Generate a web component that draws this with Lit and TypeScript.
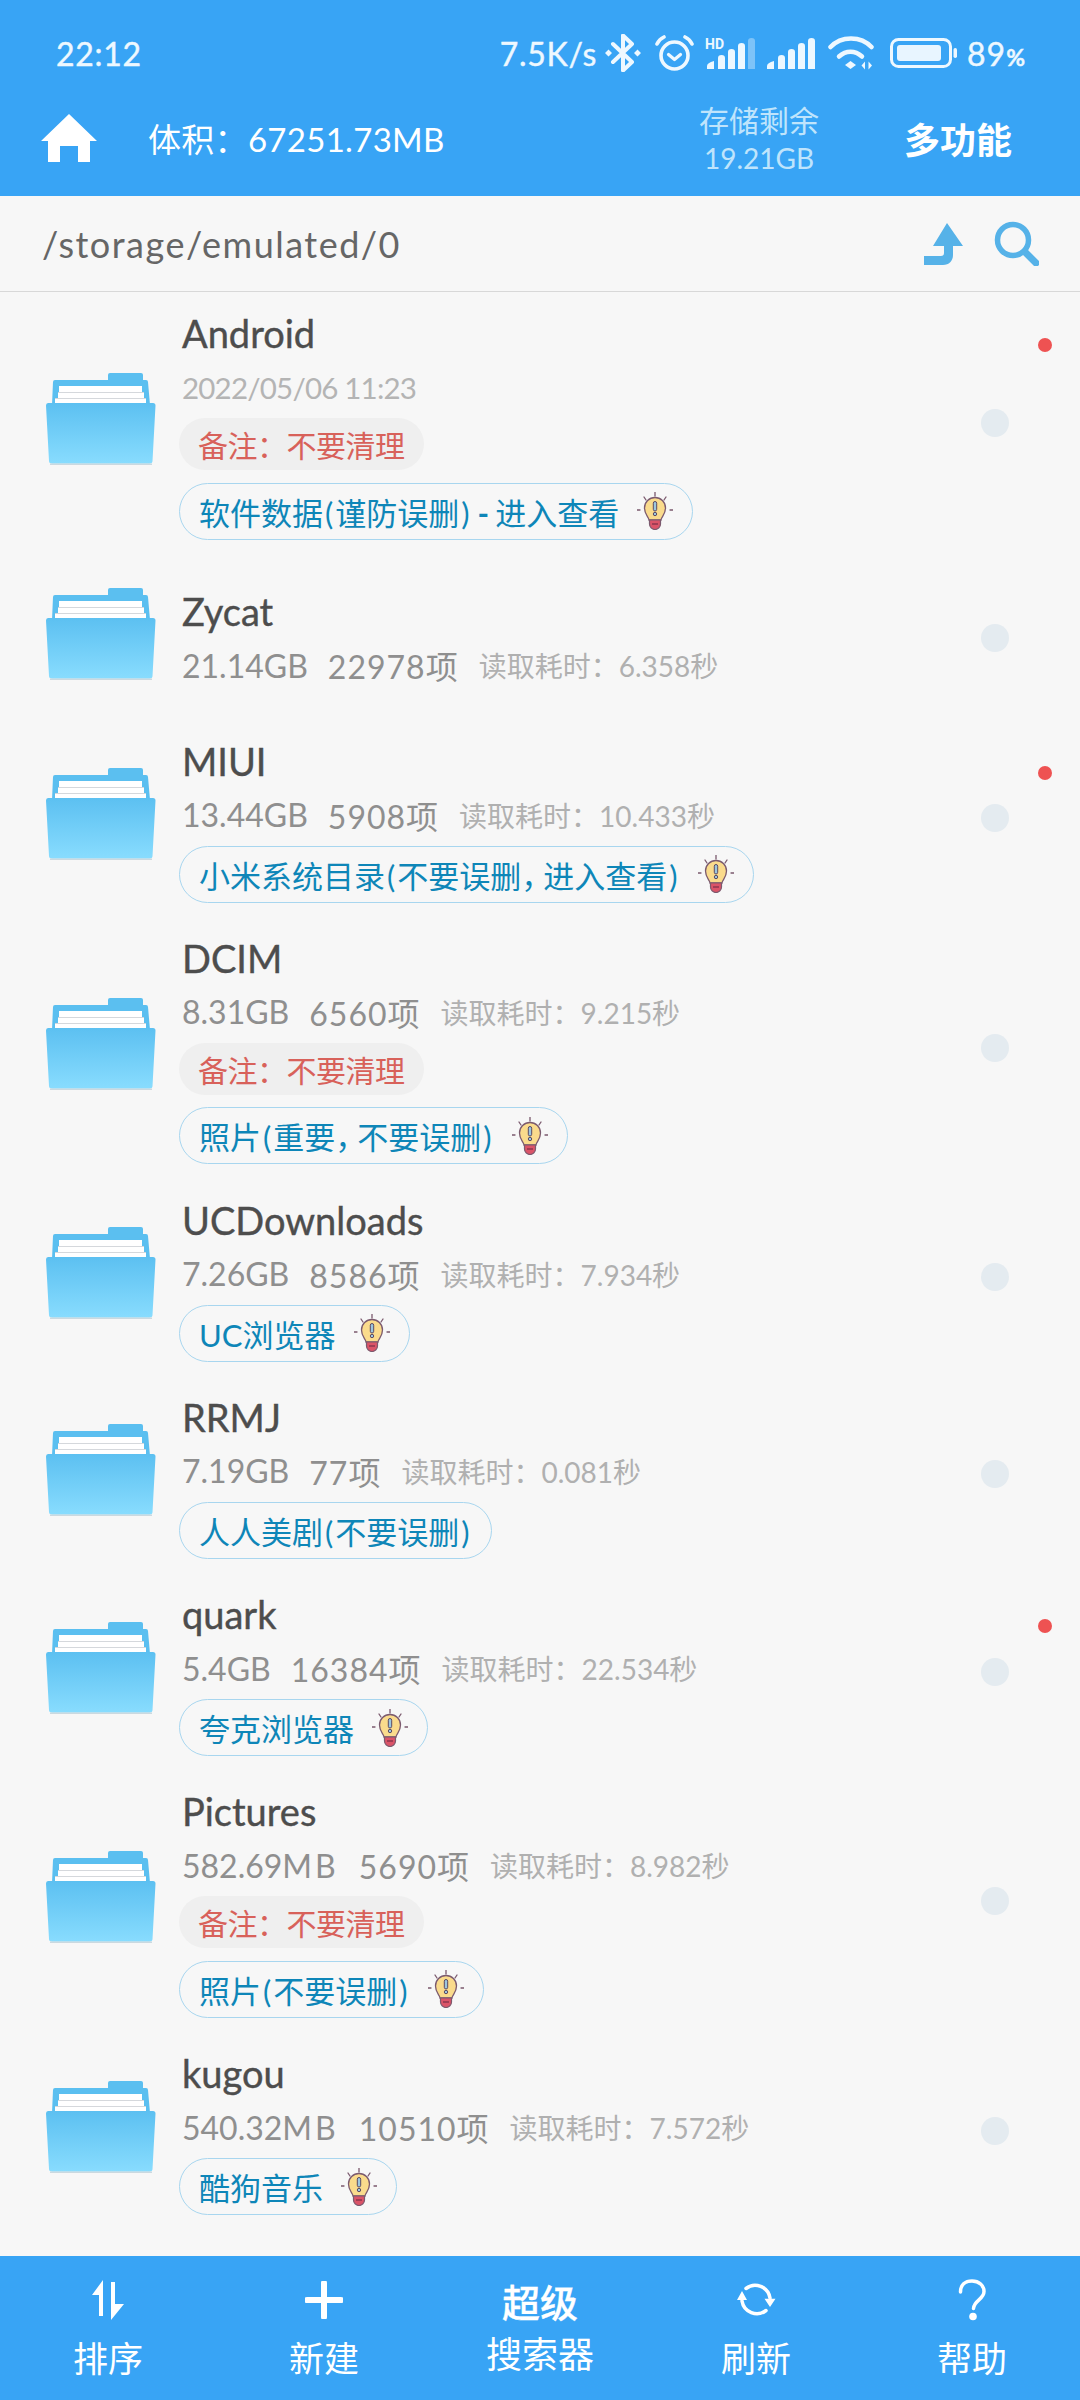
import { LitElement, html, css, svg, nothing } from "lit";
import { customElement } from "lit/decorators.js";

interface Row {
  name: string;
  date?: string;
  size?: string;
  count?: string;
  time?: string;
  note?: boolean;
  tip?: string;
  bulb?: boolean;
  red?: boolean;
  extra?: number;
}

const ROWS: Row[] = [
  { name: "Android", date: "2022/05/06 11:23", note: true, tip: "软件数据(谨防误删)-进入查看", bulb: true, red: true, extra: 16.5 },
  { name: "Zycat", size: "21.14GB", count: "22978项", time: "读取耗时：6.358秒", extra: 13.5 },
  { name: "MIUI", size: "13.44GB", count: "5908项", time: "读取耗时：10.433秒", tip: "小米系统目录(不要误删，进入查看)", bulb: true, red: true },
  { name: "DCIM", size: "8.31GB", count: "6560项", time: "读取耗时：9.215秒", note: true, tip: "照片(重要，不要误删)", bulb: true },
  { name: "UCDownloads", size: "7.26GB", count: "8586项", time: "读取耗时：7.934秒", tip: "UC浏览器", bulb: true },
  { name: "RRMJ", size: "7.19GB", count: "77项", time: "读取耗时：0.081秒", tip: "人人美剧(不要误删)" },
  { name: "quark", size: "5.4GB", count: "16384项", time: "读取耗时：22.534秒", tip: "夸克浏览器", bulb: true, red: true },
  { name: "Pictures", size: "582.69MB", count: "5690项", time: "读取耗时：8.982秒", note: true, tip: "照片(不要误删)", bulb: true },
  { name: "kugou", size: "540.32MB", count: "10510项", time: "读取耗时：7.572秒", tip: "酷狗音乐", bulb: true },
];

const folder = html`<svg class="folder" viewBox="0 0 110 92">
  <defs>
    <linearGradient id="fg" x1="0" y1="0" x2="0" y2="1">
      <stop offset="0" stop-color="#5CC0F1" />
      <stop offset="1" stop-color="#88DCFE" />
    </linearGradient>
  </defs>
  <path d="M62 7V2q0-2 2-2h31q2 0 2 2v5z" fill="#5BBFF0" />
  <path d="M9 7h91q2 0 2 2l2 23H6L7 9q0-2 2-2z" fill="#5BBFF0" />
  <rect x="13" y="13" width="83" height="6" fill="#fff" />
  <rect x="12" y="19" width="86" height="1.5" fill="#d5d8dc" />
  <rect x="12" y="20" width="86" height="5" fill="#fff" />
  <rect x="9" y="25" width="91" height="1.5" fill="#d5d8dc" />
  <rect x="9" y="26" width="91" height="5" fill="#fff" />
  <path d="M2 30h105q2.500 0 2.500 2.500L106.500 88q0 2.500-3 2.500H6q-3 0-3-2.500L0 32.500Q0 30 2 30z" fill="url(#fg)" />
  <rect x="4" y="90.500" width="102" height="1.500" fill="#b8ccd6" opacity=".7" />
</svg>`;

const bulb = html`<svg class="bulb" viewBox="0 0 36 38">
  <g stroke="#7b5a6e" stroke-width="1.300" stroke-linecap="round" fill="none">
    <path d="M18 0v4M7 5l2 3M29 5l-2 3M0 18h3M33 18h3" />
  </g>
  <path d="M12 28c0-3-4.500-5-4.500-12a10.500 10.500 0 0 1 21 0c0 7-4.500 9-4.500 12z" fill="#FADB8C" stroke="#7b5a6e" stroke-width="1.300" />
  <path d="M12.500 28h11v4a5.500 5.500 0 0 1-11 0z" fill="#DB5468" stroke="#7b5a6e" stroke-width="1.200" />
  <path d="M15 32h6" stroke="#7b3048" stroke-width="1.200" />
  <rect x="16.300" y="9.500" width="3.400" height="9.500" rx="1.700" fill="#9CC7DF" stroke="#5c4a62" stroke-width="1" />
  <circle cx="18" cy="22" r="1.700" fill="#9CC7DF" stroke="#5c4a62" stroke-width="1" />
</svg>`;

const ICON = "#eef8ff";
const bar = (x: number, top: number, fill: string) =>
  svg`<path d="M${x} 31v-${31 - top - 3}q0-3 3.500-3t3.500 3v${31 - top - 3}z" fill="${fill}" />`;
const bars = (x0: number, last: string) => svg`
  <path d="M${x0} 31v-3q0-3 7-5v8z" fill="${ICON}" />
  ${bar(x0 + 11, 17, ICON)}
  ${bar(x0 + 21, 11, ICON)}
  ${bar(x0 + 31, 5, ICON)}
  ${bar(x0 + 41, 0, last)}
`;

@customElement("app-root")
export class AppRoot extends LitElement {
  static styles = css`
    :host {
      display: flex;
      flex-direction: column;
      width: 1080px;
      height: 2400px;
      overflow: hidden;
      background: #f7f7f7;
      font-family: Lato, "Noto Sans CJK SC", sans-serif;
    }
    .head {
      background: #38a4f5;
      color: #fff;
      height: 196px;
      flex: none;
      display: flex;
      flex-direction: column;
    }
    .status {
      height: 106px;
      flex: none;
      display: flex;
      align-items: center;
      padding: 0 55px 0 56px;
      font-size: 32px;
      color: #eef8ff;
      letter-spacing: 0.7px;
      -webkit-text-stroke: 0.4px #eef8ff;
    }
    .status .time { flex: 1; }
    .status svg { display: block; flex: none; }
    .speed { margin-right: 8px; }
    .bt { width: 36px; height: 38px; margin-right: 14px; }
    .alarm { width: 39px; height: 36px; margin-right: 11px; }
    .sig-hd { width: 50px; height: 35px; margin: -4px 12px 0 0; }
    .sig { width: 48px; height: 31px; margin-right: 13px; }
    .wifi { width: 46px; height: 36px; margin-right: 16px; }
    .batt { width: 67px; height: 30px; margin-right: 10px; }
    .pct { font-size: 32px; letter-spacing: 1px; }
    .pct small { font-size: 23px; font-weight: 700; letter-spacing: 0; }
    .tool {
      flex: 1;
      min-height: 0;
      display: flex;
      align-items: center;
      padding: 0 68px 24px 41px;
      margin-top: -2px;
    }
    .home { width: 56px; height: 48px; margin-right: 51px; display: block; flex: none; }
    .vol { font-size: 33px; flex: 1; letter-spacing: 0.3px; }
    .free {
      font-size: 30px;
      line-height: 38px;
      text-align: center;
      color: #bfe4fc;
      margin: 2px 85px 0 0;
    }
    .free div:last-child { font-size: 28px; }
    .more { font-size: 36px; font-weight: 700; }
    .path {
      height: 96px;
      flex: none;
      box-sizing: border-box;
      border-bottom: 1.5px solid #d8d8d8;
      display: flex;
      align-items: center;
      padding: 0 41px 0 42px;
      color: #666;
      font-size: 36px;
      background: #f7f7f7;
    }
    .path span { flex: 1; letter-spacing: 1.5px; }
    .up { width: 42px; height: 42px; margin-right: 28px; display: block; }
    .search { width: 45px; height: 45px; display: block; }
    .list { flex: 1; overflow: hidden; min-height: 0; }
    .row {
      position: relative;
      display: flex;
      align-items: center;
      padding: 14px 71px 0 46px;
      margin-bottom: 14.3px;
    }
    .folder { width: 110px; height: 92px; flex: none; margin: 0 26px 8px 0; display: block; }
    .info { flex: 1; min-width: 0; }
    .name {
      font-size: 38px;
      line-height: 54px;
      color: #4d4d4d;
      -webkit-text-stroke: 0.4px #4d4d4d;
    }
    .sub {
      height: 54px;
      display: flex;
      align-items: center;
      gap: 20px;
      font-size: 32px;
      color: #8f8f8f;
      white-space: nowrap;
    }
    .sub .u { letter-spacing: 3px; }
    .sub .c { letter-spacing: 1px; }
    .sub .t { font-size: 28px; color: #b0b0b0; }
    .sub .d { color: #b4b4b4; font-size: 29.5px; letter-spacing: -0.8px; }
    .pill {
      display: flex;
      width: fit-content;
      box-sizing: border-box;
      align-items: center;
      margin-left: -3px;
      border-radius: 30px;
      padding: 0 19px;
      white-space: nowrap;
    }
    .note {
      height: 52px;
      background: #efefef;
      color: #d8615a;
      margin-top: 4px;
      font-size: 30px;
      letter-spacing: -0.5px;
    }
    .tip {
      height: 57px;
      border: 1.2px solid #a8d6ef;
      color: #0e86b8;
      font-size: 31px;
    }
    .pm { margin: 0 2px; }
    .dash { font-weight: 700; margin: 0 6px; }
    .cm { letter-spacing: -9px; }
    .note + .tip { margin-top: 12.500px; }
    .sub + .tip { margin-top: 4px; }
    .bulb { width: 36px; height: 38px; margin-left: 18px; display: block; }
    .dot { width: 28px; height: 28px; border-radius: 50%; background: #e4ebf0; flex: none; }
    .red { position: absolute; right: 28px; top: 46px; width: 14px; height: 14px; border-radius: 50%; background: #ee5252; }
    .foot {
      height: 144px;
      flex: none;
      background: #38a4f5;
      color: #fff;
      display: grid;
      grid-template-columns: repeat(5, 216px);
    }
    .cell { display: flex; flex-direction: column; align-items: center; }
    .cell svg { display: block; }
    .ico { height: 80px; display: flex; align-items: center; padding-top: 8px; box-sizing: border-box; }
    .lab { font-size: 35px; line-height: 44px; }
    .big { font-size: 38px; font-weight: 500; height: 80px; line-height: 92px; -webkit-text-stroke: 0.3px #fff; }
    .lab.s { font-size: 36px; margin-top: -4px; }
  `;

  private tools = [
    {
      l: "排序",
      i: html`<svg width="32" height="40" viewBox="0 0 32 40"><path d="M11 0v36H7V15H0z" fill="#fff" /><path d="M19 2h4v22h9L19 40z" fill="#fff" /></svg>`,
    },
    {
      l: "新建",
      i: html`<svg width="38" height="38" viewBox="0 0 38 38"><path d="M19 2v34M2 19h34" stroke="#fff" stroke-width="6" stroke-linecap="round" /></svg>`,
    },
    { l: "", i: nothing },
    {
      l: "刷新",
      i: html`<svg width="39" height="34" viewBox="0 0 39 34" fill="none"><path d="M9 5.500A15 15 0 0 1 33 15M5 18A15 15 0 0 0 29 27.500" stroke="#fff" stroke-width="3.500" stroke-linecap="round" /><path d="M5 8L0 17h10zM27.500 15.700h11L33 24z" fill="#fff" /></svg>`,
    },
    {
      l: "帮助",
      i: html`<svg width="28" height="42" viewBox="0 0 28 42" fill="none"><path d="M2.500 13C2.500 6 7 2 14 2s12 4.500 12 10.500c0 8-10 8.500-10.500 17" stroke="#fff" stroke-width="3.500" stroke-linecap="round" /><circle cx="15" cy="37.500" r="3.800" fill="#fff" /></svg>`,
    },
  ];

  private tipText(t: string) {
    return t.split(/([()\-，])/).map((p) => {
      if (p === "(" || p === ")") return html`<span class="pm">${p}</span>`;
      if (p === "-") return html`<span class="dash">${p}</span>`;
      if (p === "，") return html`<span class="cm">${p}</span>`;
      return p;
    });
  }

  private sizeText(s = "") {
    return s.endsWith("MB")
      ? html`${s.slice(0, -2)}<span class="u">MB</span>`
      : s;
  }

  private renderRow(r: Row) {
    return html`<div class="row" style=${r.extra ? `margin-bottom:${14 + r.extra}px` : ""}>
      ${folder}
      <div class="info">
        <div class="name">${r.name}</div>
        <div class="sub">
          ${r.date
            ? html`<span class="d">${r.date}</span>`
            : html`<span>${this.sizeText(r.size)}</span><span class="c">${r.count}</span><span class="t">${r.time}</span>`}
        </div>
        ${r.note ? html`<div class="pill note">备注：不要清理</div>` : nothing}
        ${r.tip ? html`<div class="pill tip"><span>${this.tipText(r.tip)}</span>${r.bulb ? bulb : nothing}</div>` : nothing}
      </div>
      <div class="dot"></div>
      ${r.red ? html`<div class="red"></div>` : nothing}
    </div>`;
  }

  render() {
    return html`
      <div class="head">
        <div class="status">
          <span class="time">22:12</span>
          <span class="speed">7.5K/s</span>
          <svg class="bt" viewBox="0 0 36 38" fill="none">
            <path d="M8 10l19 18-9 8.500V1.500L27 10 8 28" stroke="${ICON}" stroke-width="4" stroke-linejoin="round" stroke-linecap="round" />
            <path d="M3.500 15.500L7 19l-3.500 3.500L0 19zM32.500 15.500L36 19l-3.500 3.500L29 19z" fill="${ICON}" />
          </svg>
          <svg class="alarm" viewBox="0 0 39 36" fill="none" stroke="${ICON}" stroke-linecap="round">
            <circle cx="19.500" cy="20.500" r="13.500" stroke-width="3.600" />
            <path d="M13.500 19.500l6 5 6-5" stroke-width="3.200" stroke-linejoin="round" />
            <path d="M2 9q2-4.500 7-7M37 9q-2-4.500-7-7" stroke-width="3.600" />
          </svg>
          <svg class="sig-hd" viewBox="0 -4 50 35">
            ${bars(2, "rgba(255,255,255,.35)")}
            <text x="0" y="11" font-size="14" font-weight="700" font-family="Roboto, sans-serif" fill="${ICON}" stroke="none" letter-spacing="0">HD</text>
          </svg>
          <svg class="sig" viewBox="0 0 48 31">${bars(0, ICON)}</svg>
          <svg class="wifi" viewBox="0 0 46 36" fill="none" stroke="${ICON}" stroke-linecap="round">
            <path d="M2.500 12C13 .5 33 .5 43.500 12" stroke-width="4.500" />
            <path d="M11 21.500c7-6.500 16-6.500 23 0" stroke-width="4.500" />
            <path d="M22.500 26l5.500 4-5.500 4-5.500-4z" fill="${ICON}" stroke="none" />
            <path d="M37 26.500v8l-3.500-4zM40.500 26.500v8l3.500-4z" fill="${ICON}" stroke="none" />
          </svg>
          <svg class="batt" viewBox="0 0 67 30" fill="none">
            <rect x="1.500" y="1.500" width="59" height="27" rx="7" stroke="${ICON}" stroke-width="3" />
            <rect x="7" y="7" width="44" height="16" rx="3" fill="#e8f5ff" />
            <rect x="63.500" y="10" width="3.500" height="10" rx="1.700" fill="${ICON}" />
          </svg>
          <span class="pct">89<small>%</small></span>
        </div>
        <div class="tool">
          <svg class="home" viewBox="0 0 56 48">
            <path d="M28 0l28 27h-7v21H37V32H19v16H7V27H0z" fill="#fff" />
          </svg>
          <span class="vol">体积：67251.73MB</span>
          <div class="free"><div>存储剩余</div><div>19.21GB</div></div>
          <span class="more">多功能</span>
        </div>
      </div>
      <div class="path">
        <span>/storage/emulated/0</span>
        <svg class="up" viewBox="0 0 42 42">
          <path d="M23 0l16 23H29v9c0 6-4 10-10 10H0v-9h17c2 0 3-1 3-3v-7H9z" fill="#56b2e8" />
        </svg>
        <svg class="search" viewBox="0 0 45 45" fill="none" stroke="#56b2e8" stroke-linecap="round">
          <circle cx="19" cy="19" r="15.500" stroke-width="5.500" />
          <path d="M31 31l11 11" stroke-width="7" />
        </svg>
      </div>
      <div class="list">${ROWS.map((r) => this.renderRow(r))}</div>
      <div class="foot">
        ${this.tools.map((t, i) =>
          i === 2
            ? html`<div class="cell"><div class="big">超级</div><div class="lab s">搜索器</div></div>`
            : html`<div class="cell"><div class="ico">${t.i}</div><div class="lab">${t.l}</div></div>`
        )}
      </div>
    `;
  }
}
